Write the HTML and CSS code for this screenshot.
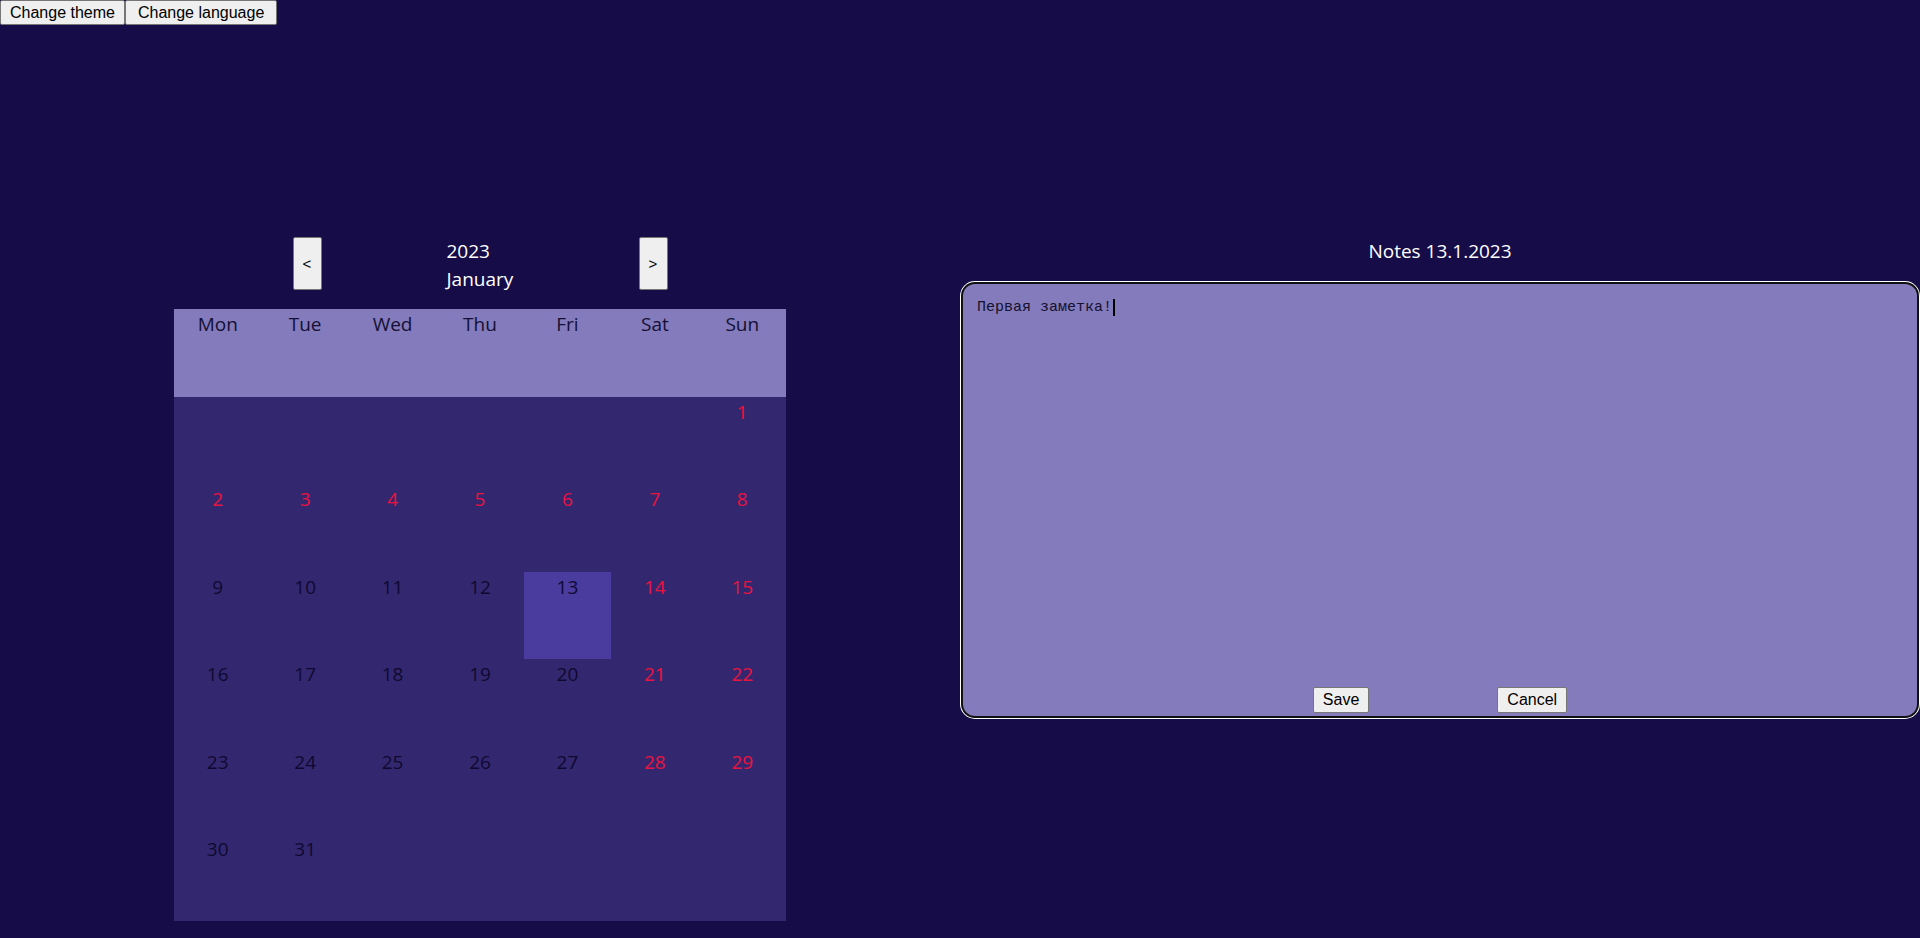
FILE: index.html
```html
<!DOCTYPE html>
<html lang="en">
<head>
<meta charset="utf-8">
<title>Calendar notes</title>
<link rel="stylesheet" href="styles.css">
</head>
<body>
<div class="toolbar">
  <button class="tb-btn">Change theme</button><button class="tb-btn tb-btn-wide">Change language</button>
</div>
<main class="main">
  <section class="cal-col">
    <div class="cal-head">
      <button class="nav-btn">&lt;</button>
      <div class="cal-title"><div>2023</div><div>January</div></div>
      <button class="nav-btn">&gt;</button>
    </div>
    <div class="grid">
      <div class="cell head">Mon</div><div class="cell head">Tue</div><div class="cell head">Wed</div><div class="cell head">Thu</div><div class="cell head">Fri</div><div class="cell head">Sat</div><div class="cell head">Sun</div>
      <div class="cell"></div><div class="cell"></div><div class="cell"></div><div class="cell"></div><div class="cell"></div><div class="cell"></div><div class="cell red">1</div>
      <div class="cell red">2</div><div class="cell red">3</div><div class="cell red">4</div><div class="cell red">5</div><div class="cell red">6</div><div class="cell red">7</div><div class="cell red">8</div>
      <div class="cell">9</div><div class="cell">10</div><div class="cell">11</div><div class="cell">12</div><div class="cell sel">13</div><div class="cell red">14</div><div class="cell red">15</div>
      <div class="cell">16</div><div class="cell">17</div><div class="cell">18</div><div class="cell">19</div><div class="cell">20</div><div class="cell red">21</div><div class="cell red">22</div>
      <div class="cell">23</div><div class="cell">24</div><div class="cell">25</div><div class="cell">26</div><div class="cell">27</div><div class="cell red">28</div><div class="cell red">29</div>
      <div class="cell">30</div><div class="cell">31</div><div class="cell"></div><div class="cell"></div><div class="cell"></div><div class="cell"></div><div class="cell"></div>
    </div>
  </section>
  <section class="notes-col">
    <div class="notes-title">Notes 13.1.2023</div>
    <div class="notes-panel">
      <div class="notes-text"><span>Первая заметка!</span><span class="caret"></span></div>
      <div class="notes-actions">
        <button class="act-btn">Save</button>
        <button class="act-btn">Cancel</button>
      </div>
    </div>
  </section>
</main>
</body>
</html>
```
FILE: styles.css
```css
html, body {
  margin: 0;
  padding: 0;
  background: #150c48;
  height: 100%;
  overflow: hidden;
}

body {
  font-family: "Open Sans", "Noto Sans", sans-serif;
}

.toolbar {
  display: flex;
  height: 25px;
}

.tb-btn,
.nav-btn,
.act-btn {
  font-family: "Liberation Sans", Arial, sans-serif;
  background: #efefef;
  color: #000;
  border: 1px solid #767676;
  border-radius: 2px;
  margin: 0;
}

.tb-btn {
  font-size: 16px;
  line-height: 18px;
  padding: 3px 9px;
  height: 25px;
}

.tb-btn-wide {
  padding: 3px 12px;
}

.main {
  display: flex;
  padding-top: 212px;
}

.cal-col {
  width: 50%;
  display: flex;
  flex-direction: column;
  align-items: center;
}

.cal-head {
  display: flex;
  align-items: flex-start;
  gap: 125px;
  height: 56px;
}

.nav-btn {
  width: 29px;
  height: 53px;
  font-size: 15px;
  padding: 0;
}

.cal-title {
  width: 67px;
  color: #ffffff;
  font-size: 19px;
  line-height: 28px;
  white-space: nowrap;
  text-align: left;
}

.grid {
  margin-top: 16px;
  width: 612px;
  display: grid;
  grid-template-columns: repeat(7, 1fr);
  grid-template-rows: 88px repeat(6, 87.4px);
  background: #33286f;
}

.cell {
  text-align: center;
  font-size: 19px;
  line-height: 28px;
  padding-top: 1px;
  color: #0e0930;
}

.cell.head {
  background: #837bbb;
  color: #141035;
}

.cell.red {
  color: #ea1340;
}

.cell.sel {
  background: #4a3c9f;
}

.notes-col {
  width: 50%;
  display: flex;
  flex-direction: column;
}

.notes-title {
  text-align: center;
  color: #ffffff;
  font-size: 19px;
  line-height: 28px;
  margin-bottom: 19px;
}

.notes-panel {
  margin: 0 3px;
  height: 432px;
  background: #837bbb;
  border-radius: 12px;
  box-shadow: 0 0 0 2px #101010, 0 0 0 3px #ffffff;
  display: flex;
  flex-direction: column;
  box-sizing: border-box;
  padding-bottom: 3px;
}

.notes-text {
  flex: 1;
  padding: 15px 14px;
  font-family: "Liberation Mono", "DejaVu Sans Mono", monospace;
  font-size: 15px;
  line-height: 17px;
  color: #15112f;
  display: flex;
  align-items: flex-start;
}

.caret {
  display: inline-block;
  width: 2px;
  height: 17px;
  background: #000;
  margin-left: 1px;
}

.notes-actions {
  display: flex;
  justify-content: center;
  gap: 128px;
}

.act-btn {
  font-size: 16px;
  line-height: 18px;
  padding: 3px 9px;
  height: 26px;
}
```
